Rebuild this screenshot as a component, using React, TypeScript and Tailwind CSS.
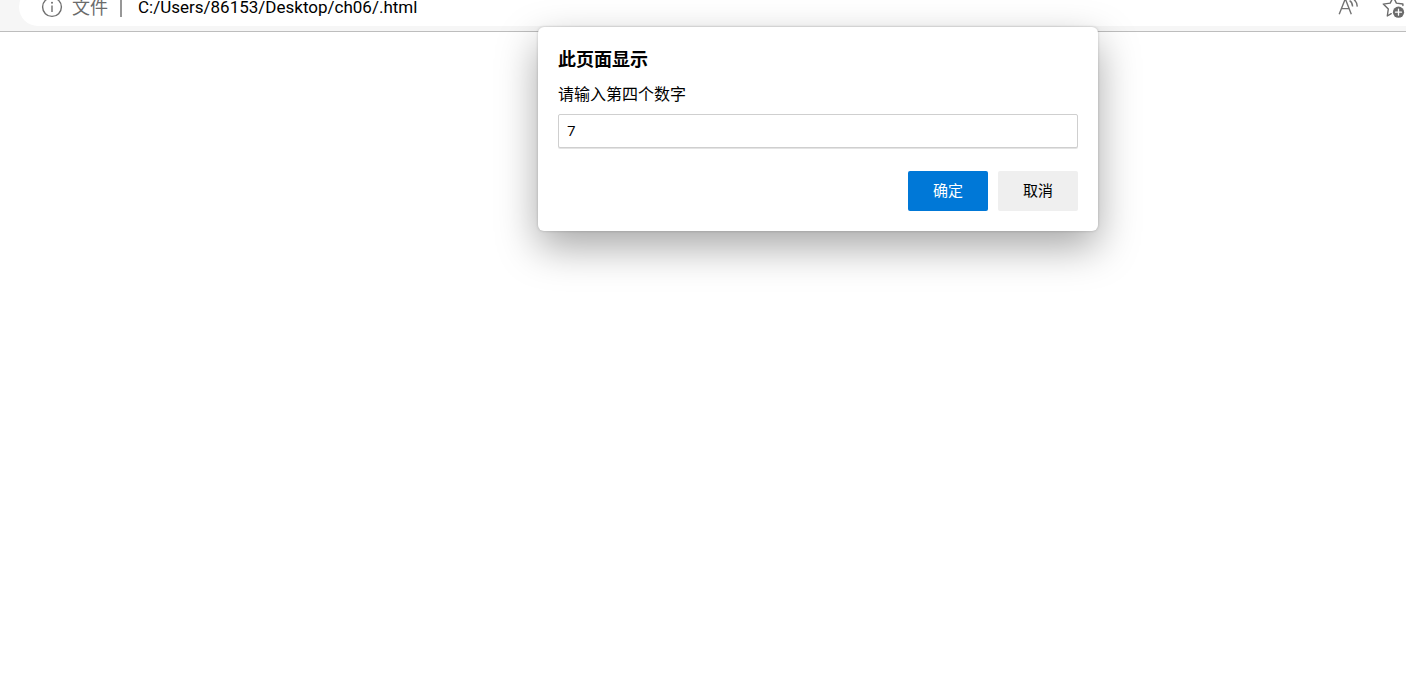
import { useState } from 'react';

function InfoIcon() {
  return (
    <svg className="h-[22px] w-[22px] shrink-0" viewBox="0 0 22 22" fill="none" stroke="#6f6f6f" strokeWidth="1.4" aria-hidden="true">
      <circle cx="11" cy="11" r="9.4" />
      <path d="M11 9.5v6.5" />
      <circle cx="11" cy="6.8" r="1" fill="#6f6f6f" stroke="none" />
    </svg>
  );
}

function ReadAloudIcon() {
  return (
    <svg className="h-6 w-6" viewBox="0 0 24 24" fill="none" stroke="#737373" strokeWidth="1.4" aria-hidden="true">
      <path d="M3.2 19.2 9.3 3.8 15.3 19.2M5.4 13.6h7.8" />
      <path d="M13.6 5.6c1.9 1.1 2.9 3 3 5.8M16.8 3.6c2.7 1.7 4.3 4.3 4.5 8" />
    </svg>
  );
}

function AddFavoriteIcon() {
  return (
    <svg className="h-6 w-6" viewBox="0 0 24 24" fill="none" aria-hidden="true">
      <path
        d="M9.2 18.7 5.3 21l1-7-5-4.9 6.9-1L11.3 2l3.1 6.1 6.5.9v1.5"
        stroke="#6b6b6b"
        strokeWidth="1.4"
        strokeLinejoin="round"
        strokeLinecap="round"
      />
      <circle cx="16.5" cy="17.2" r="5.6" fill="#6b6b6b" />
      <path d="M16.5 14.2v6M13.5 17.2h6" stroke="#fff" strokeWidth="1.3" strokeLinecap="round" />
    </svg>
  );
}

function AddressBar() {
  return (
    <header className="flex h-8 items-end overflow-hidden border-b border-[#bdbdbd] bg-[#f6f6f6] pb-[5px] pl-[19px]">
      <div className="flex h-[38px] grow items-center rounded-l-full bg-white pl-[22px] text-[18px] leading-[14px]">
        <InfoIcon />
        <span className="ml-[9px] whitespace-nowrap text-[#6b6b6b]">文件</span>
        <span className="ml-3 h-5 w-0.5 shrink-0 bg-[#979797]" />
        <span className="ml-4 grow whitespace-nowrap font-['Roboto',sans-serif] text-[17px] text-black">C:/Users/86153/Desktop/ch06/.html</span>
        <button type="button" aria-label="大声朗读" className="mr-[22px] shrink-0">
          <ReadAloudIcon />
        </button>
        <button type="button" aria-label="收藏" className="shrink-0">
          <AddFavoriteIcon />
        </button>
      </div>
    </header>
  );
}

function PromptDialog() {
  const [value, setValue] = useState('7');
  return (
    <form
      role="dialog"
      aria-labelledby="prompt-title"
      onSubmit={(event) => event.preventDefault()}
      className="flex w-[560px] flex-col rounded-md bg-white p-5 text-black shadow-[0_0_3px_rgba(0,0,0,0.2),0_16px_40px_rgba(0,0,0,0.35)]"
    >
      <h1 id="prompt-title" className="text-[18px] leading-6 font-bold">
        此页面显示
      </h1>
      <label htmlFor="prompt-value" className="mt-[11px] text-[16px] leading-6">
        请输入第四个数字
      </label>
      <input
        id="prompt-value"
        type="text"
        value={value}
        onChange={(event) => setValue(event.target.value)}
        className="mt-2 h-[34px] rounded-xs border border-[#cfcfcf] bg-white px-2 pb-0.5 text-[15px] shadow-[0_1px_0_#e4e4e4] outline-none"
      />
      <div className="mt-[23px] flex justify-end gap-2.5 text-[15px]">
        <button type="submit" className="h-10 w-20 rounded-xs bg-[#0078d7] pb-0.5 text-white">
          确定
        </button>
        <button type="button" className="h-10 w-20 rounded-xs bg-[#efefef] pb-0.5">
          取消
        </button>
      </div>
    </form>
  );
}

export default function App() {
  return (
    <div className="relative min-h-screen bg-white font-['Open_Sans','Noto_Sans_CJK_SC',sans-serif]">
      <AddressBar />
      <div className="absolute inset-x-0 top-[27px] flex justify-center pl-[230px]">
        <PromptDialog />
      </div>
    </div>
  );
}
